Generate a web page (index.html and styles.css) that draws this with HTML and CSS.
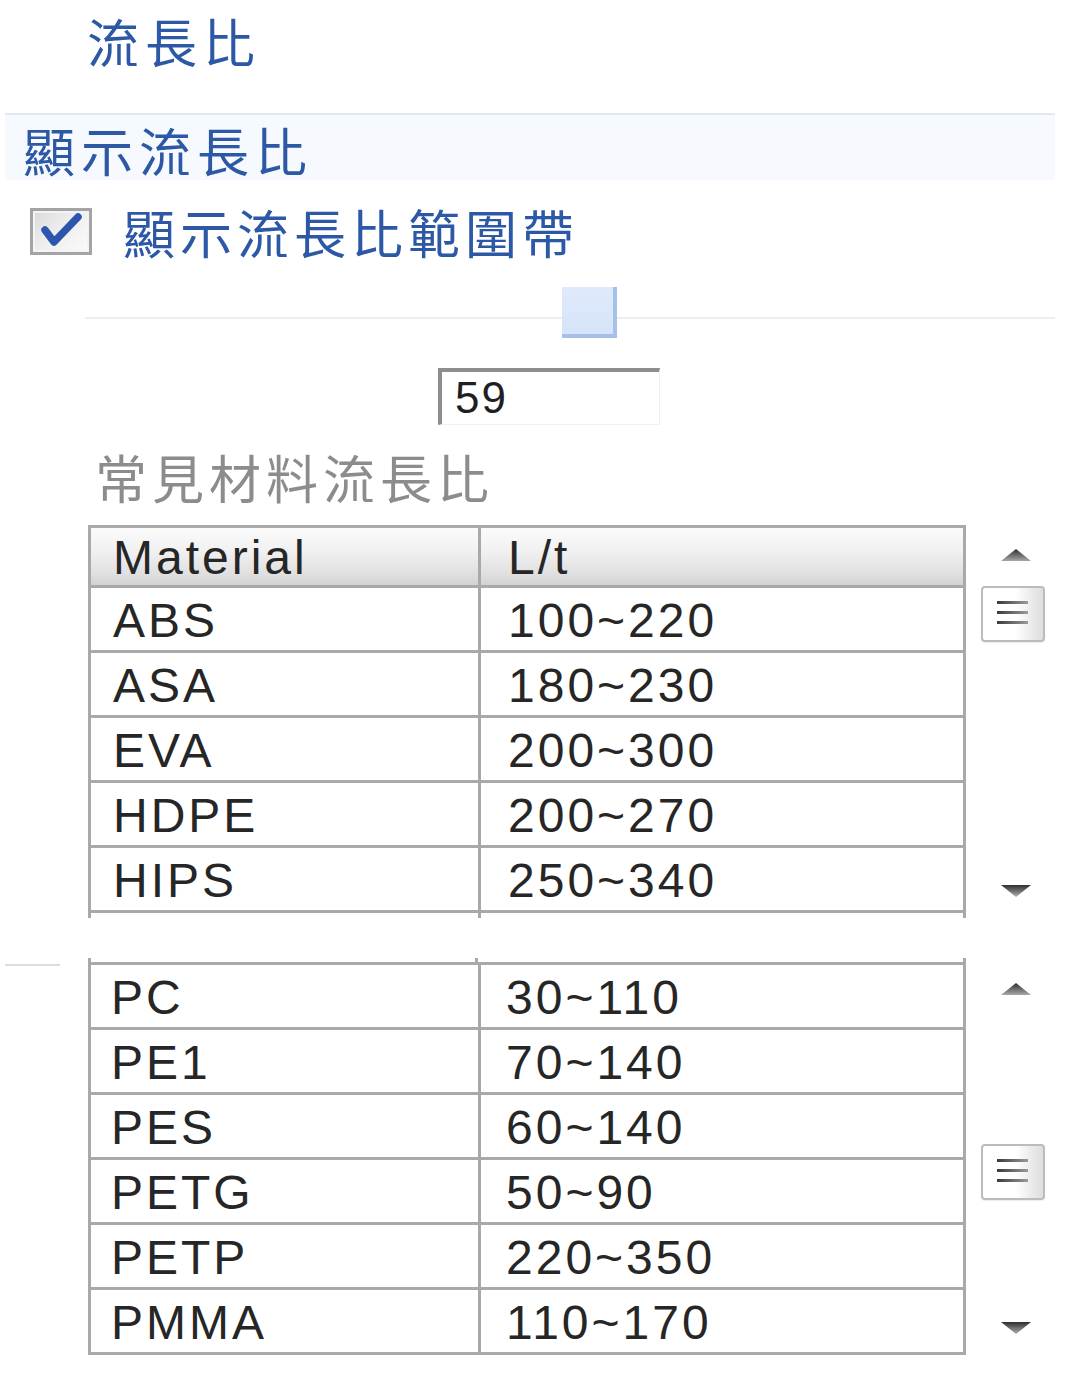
FILE: index.html
```html
<!DOCTYPE html>
<html lang="zh-Hant">
<head>
<meta charset="utf-8">
<title>流長比</title>
<link rel="stylesheet" href="styles.css">
</head>
<body>
<div class="page">
  <div class="title">流長比</div>
  <div class="sep"></div>
  <div class="band">顯示流長比</div>

  <div class="check-row">
    <span class="checkbox">
      <svg width="56" height="41" viewBox="0 0 56 41">
        <path d="M12 19 L21 31 L45 6" fill="none" stroke="#2c55ad" stroke-width="7.5" stroke-linecap="round" stroke-linejoin="round"/>
      </svg>
    </span>
    <span class="check-label">顯示流長比範圍帶</span>
  </div>

  <div class="slider">
    <div class="track"></div>
    <div class="thumb"></div>
  </div>

  <div class="value-row">
    <div class="value-input">59</div>
  </div>

  <div class="caption">常見材料流長比</div>

  <div class="list-block first">
    <div class="view view-1">
      <table class="grid">
        <colgroup><col class="col-mat"><col class="col-lt"></colgroup>
        <thead>
          <tr><th>Material</th><th>L/t</th></tr>
        </thead>
        <tbody>
          <tr><td>ABS</td><td>100~220</td></tr>
          <tr><td>ASA</td><td>180~230</td></tr>
          <tr><td>EVA</td><td>200~300</td></tr>
          <tr><td>HDPE</td><td>200~270</td></tr>
          <tr><td>HIPS</td><td>250~340</td></tr>
          <tr><td>&nbsp;</td><td>&nbsp;</td></tr>
        </tbody>
      </table>
    </div>
    <div class="vscroll s1">
      <svg class="arrow up" width="32" height="14" viewBox="0 0 32 14"><defs><linearGradient id="ga" x1="0" y1="0" x2="0" y2="1"><stop offset="0" stop-color="#2e2e2e"/><stop offset="1" stop-color="#a8a8a8"/></linearGradient></defs><polygon points="1,13 16,1 31,13" fill="url(#ga)"/></svg>
      <div class="sthumb"><svg width="32" height="26" viewBox="0 0 32 26"><defs><linearGradient id="gg" x1="0" y1="0" x2="1" y2="0"><stop offset="0" stop-color="#3a3a3a"/><stop offset="1" stop-color="#9a9a9a"/></linearGradient></defs><rect x="0" y="2" width="31" height="3" fill="url(#gg)"/><rect x="0" y="12" width="31" height="3" fill="url(#gg)"/><rect x="0" y="22" width="31" height="3" fill="url(#gg)"/></svg></div>
      <div class="fill"></div>
      <svg class="arrow down" width="32" height="14" viewBox="0 0 32 14"><defs><linearGradient id="gd" x1="0" y1="0" x2="0" y2="1"><stop offset="0" stop-color="#2e2e2e"/><stop offset="1" stop-color="#b0b0b0"/></linearGradient></defs><polygon points="1,1 31,1 16,13" fill="url(#gd)"/></svg>
    </div>
  </div>

  <div class="list-block second">
    <div class="edge-line"></div>
    <div class="view view-2">
      <div class="stub"><span></span><span></span></div>
      <table class="grid">
        <colgroup><col class="col-mat"><col class="col-lt"></colgroup>
        <tbody>
          <tr><td>PC</td><td>30~110</td></tr>
          <tr><td>PE1</td><td>70~140</td></tr>
          <tr><td>PES</td><td>60~140</td></tr>
          <tr><td>PETG</td><td>50~90</td></tr>
          <tr><td>PETP</td><td>220~350</td></tr>
          <tr><td>PMMA</td><td>110~170</td></tr>
        </tbody>
      </table>
    </div>
    <div class="vscroll s2">
      <svg class="arrow up" width="32" height="14" viewBox="0 0 32 14"><polygon points="1,13 16,1 31,13" fill="url(#ga)"/></svg>
      <div class="sthumb"><svg width="32" height="26" viewBox="0 0 32 26"><rect x="0" y="2" width="31" height="3" fill="url(#gg)"/><rect x="0" y="12" width="31" height="3" fill="url(#gg)"/><rect x="0" y="22" width="31" height="3" fill="url(#gg)"/></svg></div>
      <div class="fill"></div>
      <svg class="arrow down" width="32" height="14" viewBox="0 0 32 14"><polygon points="1,1 31,1 16,13" fill="url(#gd)"/></svg>
    </div>
  </div>
</div>
</body>
</html>
```

FILE: styles.css
```css
* { box-sizing: border-box; }

html, body {
  margin: 0;
  padding: 0;
  background: #ffffff;
}

.page {
  width: 1080px;
  height: 1381px;
  overflow: hidden;
  font-family: "Noto Sans CJK TC", "Noto Sans CJK SC", sans-serif;
  color: #2c58a6;
}

.title {
  height: 113px;
  padding: 15px 0 0 87px;
  font-size: 52px;
  line-height: 52px;
  letter-spacing: 6px;
  color: #2c58a6;
}

.sep {
  height: 2px;
  margin: 0 25px 0 5px;
  background: #e2e8f0;
}

.band {
  height: 65px;
  margin: 0 25px 0 5px;
  padding: 9px 0 0 18px;
  background: #f6f9fd;
  font-size: 52px;
  line-height: 52px;
  letter-spacing: 6px;
  color: #2c58a6;
}

.check-row {
  display: flex;
  align-items: center;
  margin-top: 28px;
  height: 47px;
  padding-left: 30px;
  gap: 31px;
}

.checkbox {
  width: 62px;
  height: 47px;
  border: 3px solid #a4a4a4;
  background: linear-gradient(135deg, #d9d9d9 0%, #eeeeee 45%, #fbfbfb 100%);
  box-shadow: inset 0 0 0 2px #f4f4f4;
  display: flex;
  align-items: center;
  justify-content: center;
}

.checkbox svg { display: block; }

.check-label {
  font-size: 52px;
  line-height: 52px;
  letter-spacing: 5px;
  color: #2c58a6;
}

.slider {
  position: relative;
  margin: 32px 0 0 85px;
  width: 970px;
  height: 51px;
}

.track {
  position: absolute;
  left: 0;
  right: 0;
  top: 30px;
  height: 2px;
  background: #ededed;
}

.thumb {
  position: absolute;
  left: 477px;
  top: 0;
  width: 55px;
  height: 51px;
  background: linear-gradient(#dfeafb, #d6e4f9);
  border-right: 4px solid #a7c0ea;
  border-bottom: 4px solid #a7c0ea;
}

.value-row {
  margin-top: 30px;
  padding-left: 438px;
}

.value-input {
  width: 222px;
  height: 57px;
  border-top: 4px solid #8d8d8d;
  border-left: 4px solid #8d8d8d;
  border-right: 1px solid #f1f1f1;
  border-bottom: 1px solid #f1f1f1;
  padding-left: 13px;
  font-family: "Liberation Sans", Arial, sans-serif;
  font-size: 44px;
  line-height: 52px;
  letter-spacing: 2px;
  color: #1f1f1f;
}

.caption {
  margin-top: 27px;
  height: 50px;
  padding-left: 95px;
  font-size: 52px;
  line-height: 50px;
  letter-spacing: 5px;
  color: #8c8c8c;
}

.list-block {
  display: flex;
  align-items: flex-start;
}

.list-block.first {
  margin-top: 23px;
  padding-left: 88px;
}

.list-block.second {
  margin-top: 40px;
}

.edge-line {
  width: 55px;
  height: 2px;
  margin: 6px 28px 0 5px;
  background: #dcdcdc;
}

.view {
  width: 878px;
  overflow: hidden;
  flex: none;
}

.view-1 { height: 393px; }
.view-2 { height: 397px; }

.stub {
  height: 4px;
  display: flex;
  border-left: 3px solid #a9a9a9;
  border-right: 3px solid #a9a9a9;
}

.stub span:first-child {
  width: 387px;
  border-right: 3px solid #a9a9a9;
}

.grid {
  width: 878px;
  table-layout: fixed;
  border-collapse: separate;
  border-spacing: 0;
  border-left: 3px solid #a9a9a9;
  border-top: 3px solid #a9a9a9;
  font-family: "Liberation Sans", Arial, sans-serif;
  font-size: 48px;
  letter-spacing: 3px;
  color: #262626;
}

.col-mat { width: 390px; }

.grid th,
.grid td {
  border-right: 3px solid #a9a9a9;
  border-bottom: 3px solid #a9a9a9;
  text-align: left;
  font-weight: normal;
  vertical-align: middle;
  padding: 0 0 0 27px;
  line-height: 48px;
  white-space: nowrap;
}

.grid th:first-child,
.grid td:first-child {
  padding-left: 22px;
}

.grid th {
  height: 60px;
  padding-top: 2px;
  background: linear-gradient(#fbfbfb 0%, #f1f1f1 40%, #e0e0e0 80%, #d2d2d2 100%);
}

.grid td {
  height: 65px;
  padding-top: 4px;
  background: #ffffff;
}

.view-2 .grid td:first-child { padding-left: 20px; }
.view-2 .grid td + td { padding-left: 25px; }

.vscroll {
  width: 64px;
  margin-left: 15px;
  display: flex;
  flex-direction: column;
  align-items: center;
}

.vscroll.s1 { height: 393px; }
.vscroll.s2 { height: 397px; }

.arrow {
  display: block;
  flex: none;
  margin-left: 6px;
}

.s1 .arrow.up { margin-top: 23px; }
.s2 .arrow.up { margin-top: 24px; }

.arrow.down { margin-bottom: 20px; }

.sthumb {
  flex: none;
  width: 64px;
  height: 56px;
  border: 2px solid #bcbcbc;
  border-radius: 4px;
  background: linear-gradient(to right, #ffffff 0%, #ffffff 55%, #ebebeb 80%, #dedede 100%);
  box-shadow: 0 1px 1px rgba(0, 0, 0, 0.08);
  display: flex;
  align-items: center;
  padding-left: 14px;
}

.sthumb svg { display: block; margin-top: -4px; }

.s1 .sthumb { margin-top: 24px; }
.s2 .sthumb { margin-top: 148px; }

.fill { flex: 1; }
```
